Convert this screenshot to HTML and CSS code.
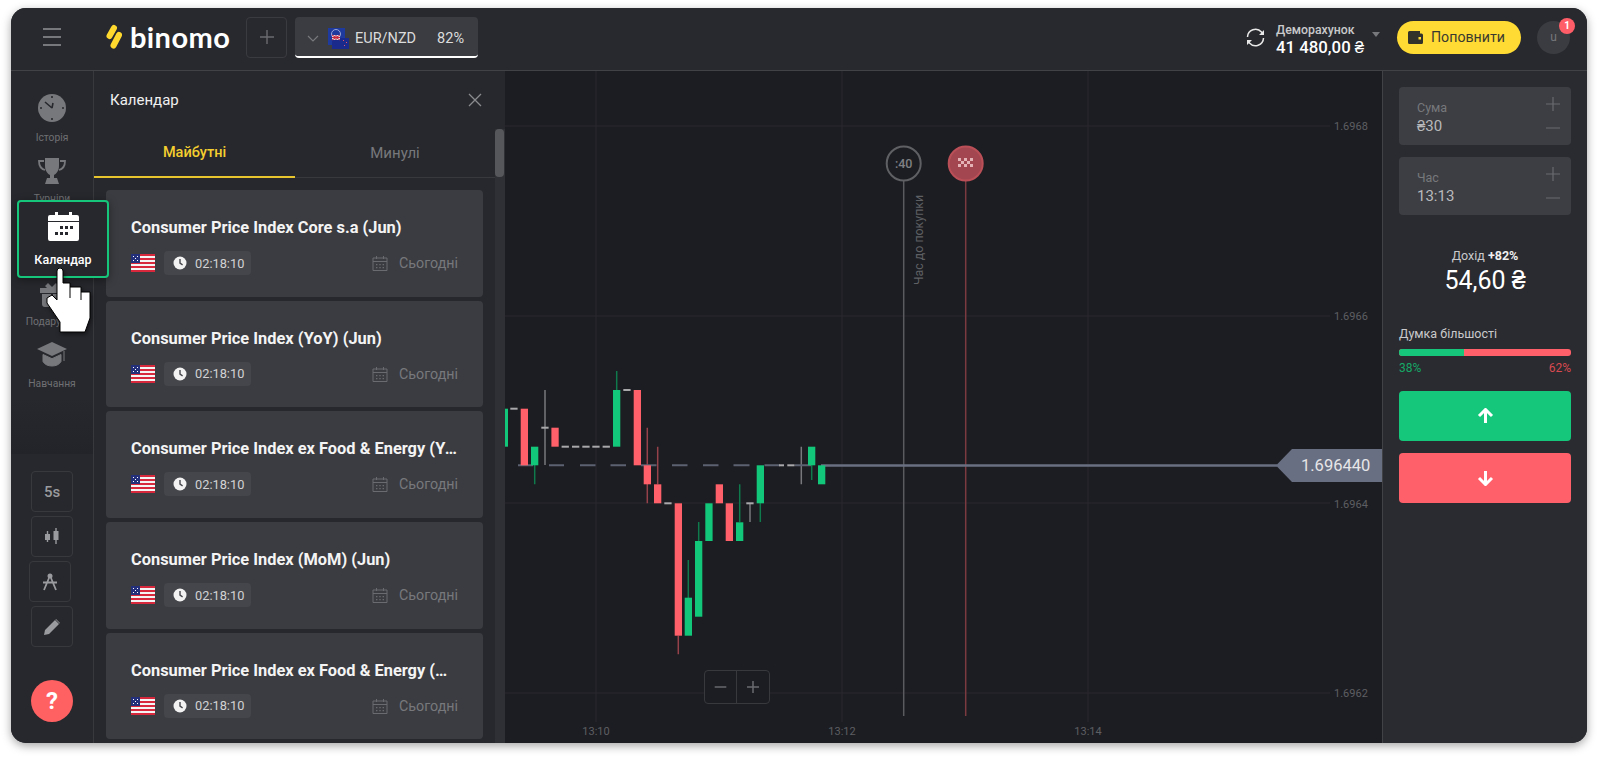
FILE: index.html
```html
<!DOCTYPE html>
<html lang="uk">
<head>
    <meta charset="UTF-8">
    <title>Binomo</title>
    <link rel="stylesheet" href="styles.css">
</head>
<body>

<svg class="icon-defs" width="0" height="0">
    <symbol id="us-flag" viewBox="0 0 24 18">
        <rect width="24" height="18" fill="#f4f4f4"/>
        <rect y="0" width="24" height="2" fill="#d8283c"/>
        <rect y="4" width="24" height="2" fill="#d8283c"/>
        <rect y="8" width="24" height="2" fill="#d8283c"/>
        <rect y="12" width="24" height="2" fill="#d8283c"/>
        <rect y="16" width="24" height="2" fill="#d8283c"/>
        <rect width="9" height="9" fill="#25307a"/>
        <path d="M2 2h1v1H2zM6 2h1v1H6zM4 4h1v1H4zM2 6h1v1H2zM6 6h1v1H6z" fill="#fff"/>
    </symbol>
    <symbol id="clock" viewBox="0 0 14 14">
        <circle cx="7" cy="7" r="6.5" fill="#f2f2f2"/>
        <path d="M7 3v4.2l2.6 1.6" fill="none" stroke="#45464b" stroke-width="1.4"/>
    </symbol>
    <symbol id="cal-line" viewBox="0 0 16 16">
        <path d="M1 3h14v12.5H1zM1 6.5h14M4.5 1v3M11.5 1v3" fill="none" stroke="#6a6b70" stroke-width="1"/>
        <path d="M4 9h1.4v1.2H4zM7.3 9h1.4v1.2H7.3zM10.6 9h1.4v1.2h-1.4zM4 12h1.4v1.2H4zM7.3 12h1.4v1.2H7.3zM10.6 12h1.4v1.2h-1.4z" fill="#6a6b70"/>
    </symbol>
</svg>

<div class="window">
    <header class="topbar">
        <div class="burger"><span></span><span></span><span></span></div>
        <div class="logo">
            <svg class="logo-mark" width="18" height="26" viewBox="0 0 18 26">
                <path d="M10 4 5.5 12M15 11 9.5 21.5" stroke="#ffd92e" stroke-width="6" stroke-linecap="round"/>
            </svg>
            <span class="logo-text">binomo</span>
        </div>
        <button class="add-tab">
            <svg width="16" height="16" viewBox="0 0 16 16"><path d="M8 1v14M1 8h14" stroke="#6a6b70" stroke-width="1.4"/></svg>
        </button>
        <div class="asset-tab">
            <svg width="12" height="7" viewBox="0 0 12 7"><path d="M1 1l5 5 5-5" fill="none" stroke="#77787c" stroke-width="1.2"/></svg>
            <svg class="pair-flag" width="21" height="21" viewBox="0 0 21 21">
                <rect width="17" height="17" fill="#1f3a9e"/>
                <rect x="4" y="10" width="17" height="11" fill="#1a2a8c"/>
                <circle cx="8" cy="6" r="4.5" fill="none" stroke="#9aa5d8" stroke-width="1"/>
                <rect x="4" y="7" width="8" height="5" fill="#d7dbe8"/>
                <path d="M4 7l8 5M12 7l-8 5M8 7v5M4 9.5h8" stroke="#c8283c" stroke-width="1"/>
                <path d="M15 12h1v1h-1zM18 14h1v1h-1zM16 17h1v1h-1z" fill="#e0566a"/>
            </svg>
            <span class="pair-name">EUR/NZD</span>
            <span class="pair-pct">82%</span>
        </div>
        <div class="topbar-right">
            <svg class="refresh" width="21" height="21" viewBox="0 0 21 21">
                <path d="M2.5 10a8 8 0 0 1 14-5l1.5 2M18.5 11a8 8 0 0 1-14 5L3 14" fill="none" stroke="#e8e8e8" stroke-width="1.5"/>
                <path d="M19 3v5h-5zM2 18v-5h5z" fill="#e8e8e8"/>
            </svg>
            <div class="account">
                <div class="account-name">Деморахунок</div>
                <div class="account-sum">41 480,00 ₴</div>
            </div>
            <span class="caret"></span>
            <button class="deposit">
                <svg width="15" height="13" viewBox="0 0 15 13">
                    <path d="M1.5 0H12v2.5h1.5A1.5 1.5 0 0 1 15 4v7.5a1.5 1.5 0 0 1-1.5 1.5h-12A1.5 1.5 0 0 1 0 11.500V1.500A1.500 1.500 0 0 1 1.500 0z" fill="#33322a"/>
                    <rect x="10.500" y="6" width="2.500" height="2.500" fill="#ffdb33"/>
                </svg>
                Поповнити
            </button>
            <div class="avatar">u<span class="badge">1</span></div>
        </div>
    </header>

    <div class="main">
        <nav class="sidebar">
            <div class="nav-list">
                <div class="nav-item">
                    <svg width="28" height="28" viewBox="0 0 28 28">
                        <circle cx="14" cy="14" r="14" fill="#77787c"/>
                        <path d="M14 14 7 8M14 14l1-5" stroke="#27282d" stroke-width="1.600"/>
                        <path d="M14 2v2M14 24v2M2 14h2M24 14h2" stroke="#27282d" stroke-width="1.600"/>
                    </svg>
                    <span>Історія</span>
                </div>
                <div class="nav-item">
                    <svg class="trophy" width="28" height="26" viewBox="0 0 28 26">
                        <path d="M7 0h14v8c0 5-3 8-5 9v3h3l2 6H7l2-6h3v-3c-2-1-5-4-5-9z" fill="#77787c"/>
                        <path d="M6 3H1c0 5 2 8 6 9M22 3h5c0 5-2 8-6 9" fill="none" stroke="#77787c" stroke-width="1.800"/>
                    </svg>
                    <span>Турніри</span>
                </div>
                <div class="nav-item"></div>
                <div class="nav-item">
                    <svg class="gift" width="24" height="24" viewBox="0 0 24 24">
                        <path d="M5 3l3-3 4 4 4-4 3 3-2 2h5v5H0V5h7z" fill="#77787c"/>
                        <path d="M2 11h9v13H5a3 3 0 0 1-3-3zM13 11h9v10a3 3 0 0 1-3 3h-6z" fill="#77787c"/>
                    </svg>
                    <span>Подарунки</span>
                </div>
                <div class="nav-item">
                    <svg class="hat" width="30" height="26" viewBox="0 0 30 26">
                        <path d="M15 0 30 7 15 14 0 7z" fill="#77787c"/>
                        <path d="M6 12.500v7c3 6 15 6 18 0v-7l-9 4.200zM27 9v10" fill="#77787c" stroke="#77787c" stroke-width="1"/>
                    </svg>
                    <span>Навчання</span>
                </div>
            </div>

            <div class="tools">
                <button class="tool tool-text">5s</button>
                <button class="tool">
                    <svg width="16" height="17" viewBox="0 0 16 17"><path d="M3.500 3v11M12 0v16" stroke="#9a9b9e" stroke-width="1.400"/><rect x="1" y="6" width="5" height="6" fill="#9a9b9e"/><rect x="9.500" y="3" width="5" height="9" fill="#9a9b9e"/></svg>
                </button>
                <button class="tool tool-shift">
                    <svg width="16" height="18" viewBox="0 0 16 18"><circle cx="8" cy="3" r="2.500" fill="#9a9b9e"/><path d="M7 5 2 17M9 5l5 12M1 9.500h14" stroke="#9a9b9e" stroke-width="1.800" fill="none"/></svg>
                </button>
                <button class="tool">
                    <svg width="16" height="16" viewBox="0 0 16 16"><path d="M0 16l1-5L11 1l4 4L5 15zM12 0l4 4-.5.500-4-4z" fill="#9a9b9e"/></svg>
                </button>
            </div>
            <button class="help">?</button>

            <div class="nav-active">
                <svg width="31" height="29" viewBox="0 0 31 29">
                    <path d="M2 3h5V0h3v3h11V0h3v3h5a2 2 0 0 1 2 2v4H0V5a2 2 0 0 1 2-2zM0 10h31v17a2 2 0 0 1-2 2H2a2 2 0 0 1-2-2z" fill="#fff"/>
                    <path d="M12 14h3v3h-3zM17 14h3v3h-3zM22 14h3v3h-3zM7 20h3v3H7zM12 20h3v3h-3zM17 20h3v3h-3z" fill="#27282d"/>
                </svg>
                <span>Календар</span>
            </div>
            <svg class="hand" width="46" height="66" viewBox="0 0 46 66">
                <path d="M11 3Q11 0 14 0T17 3V15H24V19H27V19H35V24H37V24H44V50L39 64H14V54L1 35V30L6 27L11 32Z" fill="#fff" stroke="#000" stroke-width="1"/>
                <path d="M24 19V30M35 24V32" stroke="#000" stroke-width="1"/>
            </svg>
        </nav>

        <section class="panel">
            <div class="panel-head">
                <span class="panel-title">Календар</span>
                <svg width="14" height="14" viewBox="0 0 14 14"><path d="M1 1l12 12M13 1 1 13" stroke="#8a8b8e" stroke-width="1.300"/></svg>
            </div>
            <div class="panel-body">
                <div class="panel-content">
                    <div class="tabs">
                        <div class="tab active">Майбутні</div>
                        <div class="tab">Минулі</div>
                    </div>
                    <div class="event-list">
                        <div class="event-card">
                            <div class="event-title">Consumer Price Index Core s.a (Jun)</div>
                            <div class="event-row">
                                <svg class="flag" width="24" height="18"><use href="#us-flag"/></svg>
                                <span class="timer"><svg width="14" height="14"><use href="#clock"/></svg>02:18:10</span>
                                <span class="day"><svg width="16" height="16"><use href="#cal-line"/></svg>Сьогодні</span>
                            </div>
                        </div>
                        <div class="event-card">
                            <div class="event-title">Consumer Price Index (YoY) (Jun)</div>
                            <div class="event-row">
                                <svg class="flag" width="24" height="18"><use href="#us-flag"/></svg>
                                <span class="timer"><svg width="14" height="14"><use href="#clock"/></svg>02:18:10</span>
                                <span class="day"><svg width="16" height="16"><use href="#cal-line"/></svg>Сьогодні</span>
                            </div>
                        </div>
                        <div class="event-card">
                            <div class="event-title">Consumer Price Index ex Food &amp; Energy (YoY) (Jun)</div>
                            <div class="event-row">
                                <svg class="flag" width="24" height="18"><use href="#us-flag"/></svg>
                                <span class="timer"><svg width="14" height="14"><use href="#clock"/></svg>02:18:10</span>
                                <span class="day"><svg width="16" height="16"><use href="#cal-line"/></svg>Сьогодні</span>
                            </div>
                        </div>
                        <div class="event-card">
                            <div class="event-title">Consumer Price Index (MoM) (Jun)</div>
                            <div class="event-row">
                                <svg class="flag" width="24" height="18"><use href="#us-flag"/></svg>
                                <span class="timer"><svg width="14" height="14"><use href="#clock"/></svg>02:18:10</span>
                                <span class="day"><svg width="16" height="16"><use href="#cal-line"/></svg>Сьогодні</span>
                            </div>
                        </div>
                        <div class="event-card">
                            <div class="event-title">Consumer Price Index ex Food &amp; Energy (MoM) (Jun)</div>
                            <div class="event-row">
                                <svg class="flag" width="24" height="18"><use href="#us-flag"/></svg>
                                <span class="timer"><svg width="14" height="14"><use href="#clock"/></svg>02:18:10</span>
                                <span class="day"><svg width="16" height="16"><use href="#cal-line"/></svg>Сьогодні</span>
                            </div>
                        </div>
                    </div>
                </div>
                <div class="scroll-track"><div class="scroll-thumb"></div></div>
            </div>
        </section>

        <section class="chart">
            <!-- viewBox uses the page coordinates of the chart area -->
            <svg class="chart-svg" viewBox="505 71 877 672" width="877" height="672">
                <g class="grid">
                    <path d="M505 126H1330M505 316H1330M505 503H1330M505 693H1330"/>
                    <path d="M596 71V722M842 71V722M1088 71V722"/>
                </g>
                <g class="axis">
                    <text x="1334" y="130">1.6968</text>
                    <text x="1334" y="320">1.6966</text>
                    <text x="1334" y="508">1.6964</text>
                    <text x="1334" y="697">1.6962</text>
                    <text x="596" y="735" text-anchor="middle">13:10</text>
                    <text x="842" y="735" text-anchor="middle">13:12</text>
                    <text x="1088" y="735" text-anchor="middle">13:14</text>
                </g>

                <path class="buy-line" d="M903.700 180V716"/>
                <path class="end-line" d="M965.700 180V716"/>
                <circle class="buy-circle" cx="903.700" cy="163.500" r="17"/>
                <text class="buy-time" x="903.700" y="168" text-anchor="middle">:40</text>
                <circle class="end-circle" cx="965.700" cy="163.500" r="17"/>
                <path class="end-flag" d="M958 158h3v3h-3zM964 158h3v3h-3zM970 158h3v3h-3zM961 161h3v3h-3zM967 161h3v3h-3zM958 164h3v3h-3zM964 164h3v3h-3zM970 164h3v3h-3zM961 167h3v0h-3z"/>
                <text class="buy-label" transform="translate(923 285) rotate(-90)">Час до покупки</text>

                <g class="wick-doji">
                    <path d="M545 390V465M750 503V522M801.300 446.700V484.300"/>
                </g>
                <g class="wick-up">
                    <path d="M534.700 465V484.300M616.700 371V390M688.300 560V598M698.700 522V541M739.700 484.300V522M760.300 503V522M811.700 465V480"/>
                </g>
                <g class="wick-down">
                    <path d="M647.300 427.700V503.300M657.700 446.700V484.300M678.300 635.700V654.300"/>
                </g>
                <path class="price-dash" d="M518 465.300H533M549 465.300H564M580 465.300H595.500M610.500 465.300H626M641 465.300H656.500M672 465.300H687.500M703 465.300H718.500M733.500 465.300H749.500M764.500 465.300H780M795 465.300H811"/>
                <path class="price-line" d="M821 465.600H1277"/>
                <g class="doji">
                    <rect x="510.300" y="407.700" width="7.300" height="2"/>
                    <rect x="541.300" y="426.700" width="7.300" height="2"/>
                    <rect x="561.600" y="445.700" width="7.300" height="2"/>
                    <rect x="572" y="445.700" width="7.300" height="2"/>
                    <rect x="582.300" y="445.700" width="7.300" height="2"/>
                    <rect x="592.300" y="445.700" width="7.300" height="2"/>
                    <rect x="602.600" y="445.700" width="7.300" height="2"/>
                    <rect x="623.300" y="389" width="7.300" height="2"/>
                    <rect x="664.300" y="502.300" width="7.300" height="2"/>
                    <rect x="746.300" y="502.300" width="7.300" height="2"/>
                    <rect x="779" y="464.300" width="5" height="2"/>
                    <rect x="787.300" y="464.300" width="7.300" height="2"/>
                </g>
                <g class="up">
                    <rect x="500" y="408.700" width="8" height="38"/>
                    <rect x="531" y="446.700" width="7.300" height="18.600"/>
                    <rect x="613" y="390" width="7.300" height="56.700"/>
                    <rect x="684.700" y="597.700" width="7.300" height="38"/>
                    <rect x="695" y="541" width="7.300" height="75.700"/>
                    <rect x="705.300" y="503.300" width="7.300" height="37.700"/>
                    <rect x="736" y="522.300" width="7.300" height="18.700"/>
                    <rect x="756.700" y="465.300" width="7.300" height="38"/>
                    <rect x="808" y="446.700" width="7.300" height="18.600"/>
                    <rect x="818" y="465.300" width="7.300" height="19"/>
                </g>
                <g class="down">
                    <rect x="520.700" y="408.700" width="7.300" height="56.600"/>
                    <rect x="551.400" y="427.700" width="7.300" height="19"/>
                    <rect x="633.700" y="390" width="7.300" height="75.300"/>
                    <rect x="643.700" y="465.300" width="7.300" height="19"/>
                    <rect x="654" y="484.300" width="7.300" height="19"/>
                    <rect x="674.700" y="503.300" width="7.300" height="132.400"/>
                    <rect x="715.700" y="484.300" width="7.300" height="19"/>
                    <rect x="725.700" y="503.300" width="7.300" height="37.700"/>
                </g>
            </svg>

            <div class="price-tag">1.696440</div>
            <div class="zoom-ctl">
                <svg width="32" height="32" viewBox="0 0 32 32"><path d="M10 16h12" stroke="#6a6b70" stroke-width="1.500"/></svg>
                <svg width="32" height="32" viewBox="0 0 32 32"><path d="M10 16h12M16 10v12" stroke="#6a6b70" stroke-width="1.500"/></svg>
            </div>
        </section>

        <aside class="trade">
            <div class="field">
                <div class="field-text">
                    <span class="field-label">Сума</span>
                    <span class="field-value">₴30</span>
                </div>
                <div class="field-steps">
                    <svg width="14" height="14" viewBox="0 0 14 14"><path d="M7 0v14M0 7h14" stroke="#6a6b70" stroke-width="1.200"/></svg>
                    <svg width="14" height="2" viewBox="0 0 14 2"><path d="M0 1h14" stroke="#6a6b70" stroke-width="1.200"/></svg>
                </div>
            </div>
            <div class="field">
                <div class="field-text">
                    <span class="field-label">Час</span>
                    <span class="field-value">13:13</span>
                </div>
                <div class="field-steps">
                    <svg width="14" height="14" viewBox="0 0 14 14"><path d="M7 0v14M0 7h14" stroke="#6a6b70" stroke-width="1.200"/></svg>
                    <svg width="14" height="2" viewBox="0 0 14 2"><path d="M0 1h14" stroke="#6a6b70" stroke-width="1.200"/></svg>
                </div>
            </div>
            <div class="profit">
                <div class="profit-label">Дохід <b>+82%</b></div>
                <div class="profit-value">54,60 ₴</div>
            </div>
            <div class="opinion">
                <div class="opinion-title">Думка більшості</div>
                <div class="opinion-bar"><div class="opinion-up" style="width: 38%"></div></div>
                <div class="opinion-nums"><span class="num-up">38%</span><span class="num-down">62%</span></div>
            </div>
            <button class="trade-btn btn-up">
                <svg width="17" height="16" viewBox="0 0 17 16"><path d="M8.500 15V2M2 8l6.500-6.500L15 8" fill="none" stroke="#fff" stroke-width="3"/></svg>
            </button>
            <button class="trade-btn btn-down">
                <svg width="17" height="16" viewBox="0 0 17 16"><path d="M8.500 1v13M2 8l6.500 6.500L15 8" fill="none" stroke="#fff" stroke-width="3"/></svg>
            </button>
        </aside>
    </div>
</div>

</body>
</html>
```

FILE: styles.css
```css
* {
    box-sizing: border-box;
}
body {
    margin: 0;
    padding: 8px 13px 17px 11px;
    height: 760px;
    overflow: hidden;
    background-color: #fff;
    font-family: Roboto, "Liberation Sans", sans-serif;
    color: #fff;
}
button {
    font-family: inherit;
    border: 0;
    padding: 0;
}
.icon-defs {
    position: absolute;
}
.window {
    height: 735px;
    display: flex;
    flex-direction: column;
    background-color: #27282d;
    border-radius: 15px;
    overflow: hidden;
    box-shadow: 0 3px 10px rgba(0, 0, 0, 0.35);
}

/* top bar */
.topbar {
    flex: none;
    height: 63px;
    display: flex;
    align-items: center;
    padding-bottom: 4px;
    background-color: #28292e;
    border-bottom: 1px solid #414246;
}
.burger {
    width: 18px;
    margin-left: 32px;
    display: flex;
    flex-direction: column;
    gap: 6px;
}
.burger span {
    height: 2px;
    background-color: #77787c;
}
.logo {
    display: flex;
    align-items: center;
    margin-left: 43px;
    width: 142px;
}
.logo-mark {
    margin-right: 8px;
}
.logo-text {
    font-family: Lato, sans-serif;
    font-weight: 700;
    font-size: 29px;
    line-height: 30px;
    letter-spacing: 0.4px;
}
.add-tab {
    width: 41px;
    height: 41px;
    display: flex;
    align-items: center;
    justify-content: center;
    background: none;
    border: 1px solid #3a3b40;
    border-radius: 4px;
}
.asset-tab {
    width: 183px;
    height: 41px;
    margin-left: 8px;
    padding: 4px 14px 0 12px;
    display: flex;
    align-items: center;
    background-color: #3b3c41;
    border-radius: 4px;
    border-bottom: 2px solid #fff;
    font-size: 14.5px;
    color: #dcdcdd;
}
.pair-flag {
    margin: 0 6px 0 9px;
}
.pair-pct {
    margin-left: auto;
}
.topbar-right {
    margin-left: auto;
    display: flex;
    align-items: center;
}
.refresh {
    margin-right: 10px;
}
.account {
    width: 95px;
    margin-top: 5px;
}
.account-name {
    font-size: 12.3px;
    font-weight: 500;
    line-height: 14px;
    color: #c9c9cb;
}
.account-sum {
    font-size: 16.8px;
    font-weight: 500;
    line-height: 20px;
    white-space: nowrap;
}
.caret {
    width: 0;
    height: 0;
    margin: 0 17px 6px 1px;
    border-left: 4.5px solid transparent;
    border-right: 4.5px solid transparent;
    border-top: 5px solid #77787c;
}
.deposit {
    width: 124px;
    height: 33px;
    display: flex;
    align-items: center;
    gap: 8px;
    padding-left: 11px;
    background-color: #ffdb33;
    border-radius: 17px;
    font-size: 14.2px;
    color: #3a3930;
}
.avatar {
    position: relative;
    width: 33px;
    height: 33px;
    margin: 0 17px 0 16px;
    display: flex;
    align-items: center;
    justify-content: center;
    background-color: #3b3c41;
    border-radius: 50%;
    font-size: 12px;
    color: #77787c;
}
.badge {
    position: absolute;
    top: -3px;
    right: -5px;
    width: 16px;
    height: 16px;
    line-height: 16px;
    text-align: center;
    background-color: #ff5e68;
    border-radius: 50%;
    font-size: 10px;
    font-weight: 700;
    color: #fff;
}

/* main row */
.main {
    flex: 1;
    min-height: 0;
    display: flex;
}
.sidebar {
    position: relative;
    flex: none;
    width: 83px;
    display: flex;
    flex-direction: column;
    align-items: center;
    background-color: #27282d;
    border-right: 1px solid #38393d;
}
.nav-list {
    flex: none;
    width: 100%;
    height: 383px;
    padding-top: 23px;
    background: linear-gradient(to bottom, #27282d 85%, #232429);
}
.nav-item {
    height: 61.5px;
    display: flex;
    flex-direction: column;
    align-items: center;
    gap: 8.5px;
    font-size: 10.3px;
    color: #6f7074;
}
.nav-item svg {
    flex: none;
}
.nav-item .trophy {
    margin-top: 2px;
}
.nav-item .gift {
    margin-top: 4px;
}
.nav-item .hat {
    margin-top: 2px;
}
.tools {
    margin-top: 17px;
    display: flex;
    flex-direction: column;
    gap: 4px;
}
.tool {
    width: 42px;
    height: 41px;
    display: flex;
    align-items: center;
    justify-content: center;
    background: none;
    border: 1px solid #38393d;
    border-radius: 4px;
}
.tool-shift {
    margin-left: -2px;
}
.tool-text {
    font-size: 15px;
    font-weight: 500;
    color: #9a9b9e;
}
.help {
    width: 42px;
    height: 42px;
    margin-top: 33px;
    background-color: #ff6163;
    border-radius: 50%;
    font-size: 24px;
    font-weight: 700;
    color: #fff;
}
.nav-active {
    position: absolute;
    left: 6px;
    top: 129px;
    width: 92px;
    height: 78px;
    padding-top: 10px;
    display: flex;
    flex-direction: column;
    align-items: center;
    gap: 11px;
    background-color: #27282d;
    border: 2px solid #16c77b;
    border-radius: 4px;
    box-shadow: 0 2px 8px rgba(0, 0, 0, 0.4);
    font-size: 12.5px;
    font-weight: 500;
    color: #fff;
    z-index: 2;
}
.hand {
    position: absolute;
    left: 35px;
    top: 197px;
    z-index: 3;
    filter: drop-shadow(1px 2px 2px rgba(0, 0, 0, 0.5));
}

/* calendar panel */
.panel {
    flex: none;
    width: 411px;
    display: flex;
    flex-direction: column;
    background-color: #27282d;
}
.panel-head {
    flex: none;
    height: 58px;
    padding: 0 23px 0 16px;
    display: flex;
    align-items: center;
    justify-content: space-between;
}
.panel-title {
    font-size: 15px;
    color: #f0f0f0;
}
.panel-body {
    flex: 1;
    min-height: 0;
    display: flex;
}
.panel-content {
    flex: 1;
    min-width: 0;
}
.tabs {
    height: 49px;
    display: flex;
    border-bottom: 1px solid #38393d;
}
.tab {
    flex: 1;
    height: 49px;
    line-height: 48px;
    text-align: center;
    font-size: 15px;
    color: #77787c;
}
.tab.active {
    flex: none;
    width: 201px;
    border-bottom: 2px solid #e6c52f;
    font-size: 14.5px;
    font-weight: 500;
    color: #f5cf2f;
}
.event-list {
    padding: 12px 12px 0;
    display: flex;
    flex-direction: column;
    gap: 4px;
}
.event-card {
    flex: none;
    height: 106.700px;
    padding: 28px 25px 0;
    background-color: #3b3c41;
    border-radius: 4px;
}
.event-title {
    font-size: 16.4px;
    font-weight: 700;
    line-height: 20px;
    color: #f4f4f4;
    white-space: nowrap;
    overflow: hidden;
    text-overflow: ellipsis;
}
.event-row {
    margin-top: 13px;
    display: flex;
    align-items: center;
}
.timer {
    height: 24px;
    margin-left: 9px;
    padding: 0 7px 0 9px;
    display: flex;
    align-items: center;
    gap: 8px;
    background-color: #45464b;
    border-radius: 4px;
    font-size: 12.8px;
    color: #d2d2d4;
}
.day {
    margin-left: auto;
    display: flex;
    align-items: center;
    gap: 11px;
    font-size: 14.3px;
    color: #77787c;
}
.scroll-track {
    flex: none;
    width: 10px;
    background-color: #2f3035;
}
.scroll-thumb {
    width: 9px;
    height: 48px;
    background-color: #56575b;
    border-radius: 4px;
}

/* chart */
.chart {
    position: relative;
    flex: none;
    width: 877px;
    background-color: #1c1d22;
    overflow: hidden;
}
.chart-svg {
    display: block;
}
.grid path {
    fill: none;
    stroke: #28292e;
    stroke-width: 1;
}
.axis text {
    font-size: 11px;
    fill: #5e5f63;
}
.buy-line {
    stroke: #5a5b5f;
    stroke-width: 1.500;
}
.end-line {
    stroke: #7b3a40;
    stroke-width: 1.500;
}
.buy-circle {
    fill: #1c1d22;
    stroke: #5f6064;
    stroke-width: 2;
}
.buy-time {
    font-size: 12.500px;
    font-weight: 500;
    fill: #7f8084;
}
.end-circle {
    fill: #a4464f;
    stroke: #bb4f58;
    stroke-width: 2;
}
.end-flag {
    fill: #e3b3b6;
}
.buy-label {
    font-size: 12.4px;
    fill: #5f6064;
}
.wick-doji path {
    stroke: #77787c;
    stroke-width: 1.500;
    fill: none;
}
.wick-up path {
    stroke: #0f7a4c;
    stroke-width: 1.500;
    fill: none;
}
.wick-down path {
    stroke: #96424a;
    stroke-width: 1.500;
    fill: none;
}
.price-dash {
    stroke: #5c6172;
    stroke-width: 2;
    fill: none;
}
.price-line {
    stroke: #6a7082;
    stroke-width: 2.500;
    fill: none;
}
.doji rect {
    fill: #a9a9ab;
}
.up rect {
    fill: #13c77a;
}
.down rect {
    fill: #ff6069;
}
.price-tag {
    position: absolute;
    right: 0;
    top: 378px;
    width: 106px;
    height: 33px;
    padding-left: 25px;
    line-height: 33px;
    background-color: #696f82;
    clip-path: polygon(0 50%, 16px 0, 100% 0, 100% 100%, 16px 100%);
    font-size: 16.5px;
    color: #e6e6e8;
}
.zoom-ctl {
    position: absolute;
    left: 199px;
    top: 599px;
    display: flex;
    background-color: #1c1d22;
    border: 1px solid #38393d;
    border-radius: 4px;
}
.zoom-ctl svg:first-child {
    border-right: 1px solid #38393d;
}

/* trade panel */
.trade {
    flex: 1;
    min-width: 0;
    padding: 16px 16px 0;
    display: flex;
    flex-direction: column;
    background-color: #2a2b30;
    border-left: 1px solid #414246;
}
.field {
    height: 58px;
    margin-bottom: 12px;
    padding: 13px 11px 0 18px;
    display: flex;
    justify-content: space-between;
    background-color: #3d3e43;
    border-radius: 4px;
}
.field-text {
    display: flex;
    flex-direction: column;
    gap: 2px;
}
.field-label {
    font-size: 12.500px;
    line-height: 15px;
    color: #77787c;
}
.field-value {
    font-size: 15px;
    line-height: 19px;
    color: #b9b9bb;
}
.field-steps {
    display: flex;
    flex-direction: column;
    gap: 16px;
    margin-top: -3px;
}
.profit {
    margin-top: 21px;
    text-align: center;
}
.profit-label {
    font-size: 12.500px;
    line-height: 16px;
    color: #c9c9cb;
}
.profit-label b {
    color: #f0f0f0;
}
.profit-value {
    font-size: 25px;
    line-height: 33px;
}
.opinion {
    margin-top: 29px;
}
.opinion-title {
    font-size: 12.500px;
    line-height: 16px;
    color: #c9c9cb;
}
.opinion-bar {
    height: 7px;
    margin-top: 7px;
    background-color: #ff6069;
    border-radius: 3px;
    overflow: hidden;
}
.opinion-up {
    height: 100%;
    background-color: #16c77b;
}
.opinion-nums {
    margin-top: 4px;
    display: flex;
    justify-content: space-between;
    font-size: 12px;
    line-height: 16px;
}
.num-up {
    color: #16a866;
}
.num-down {
    color: #d9494f;
}
.trade-btn {
    flex: none;
    width: 100%;
    height: 50px;
    display: flex;
    align-items: center;
    justify-content: center;
    border-radius: 4px;
}
.btn-up {
    margin-top: 15px;
    background-color: #14c77b;
}
.btn-down {
    margin-top: 12px;
    background-color: #ff6069;
}
```
